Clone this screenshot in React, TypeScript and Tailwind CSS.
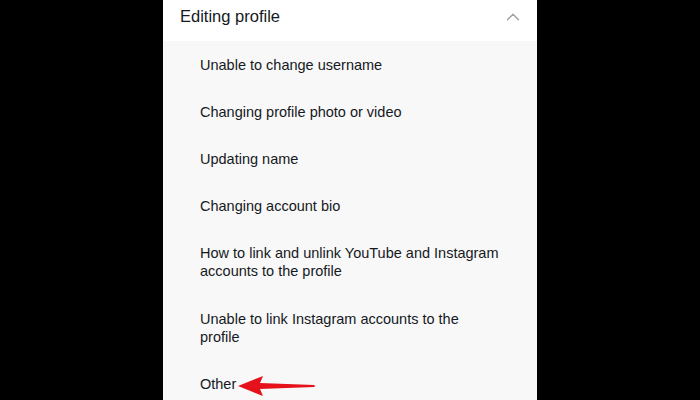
import { ChevronUp } from "lucide-react";

const items = [
  "Unable to change username",
  "Changing profile photo or video",
  "Updating name",
  "Changing account bio",
  "How to link and unlink YouTube and Instagram accounts to the profile",
  "Unable to link Instagram accounts to the profile",
  "Other",
];

export default function App() {
  return (
    <div
      className="h-[400px] w-[700px] overflow-hidden bg-black"
      style={{ fontFamily: '"Liberation Sans", Arial, sans-serif' }}
    >
      <div className="ml-[163px] h-full w-[374px] bg-[#f8f8f8]">
        {/* header */}
        <div className="flex h-[41px] items-center justify-between bg-white pl-[17px] pr-[13px]">
          <span className="-mt-[8px] text-[16.5px] leading-none text-[#161823]">
            Editing profile
          </span>
          <ChevronUp className="-mt-[8px] h-[22px] w-[22px] text-[#a0a0a0]" strokeWidth={1.5} />
        </div>

        {/* items */}
        <ul className="pl-[37px] pr-[36px]">
          {items.map((label) => (
            <li
              key={label}
              className="relative py-[14.6px] text-[14.5px] leading-[18px] text-[#161823]"
            >
              {label}
              {label === "Other" && (
                <svg
                  className="absolute left-[38px] top-[15px]"
                  width="78"
                  height="22"
                  viewBox="0 0 78 22"
                >
                  <path
                    d="M0 11 L25 1 L22 8 L76 10 Q78 11 76 12 L22 14 L25 21 Z"
                    fill="#e5121b"
                  />
                </svg>
              )}
            </li>
          ))}
        </ul>
      </div>
    </div>
  );
}
